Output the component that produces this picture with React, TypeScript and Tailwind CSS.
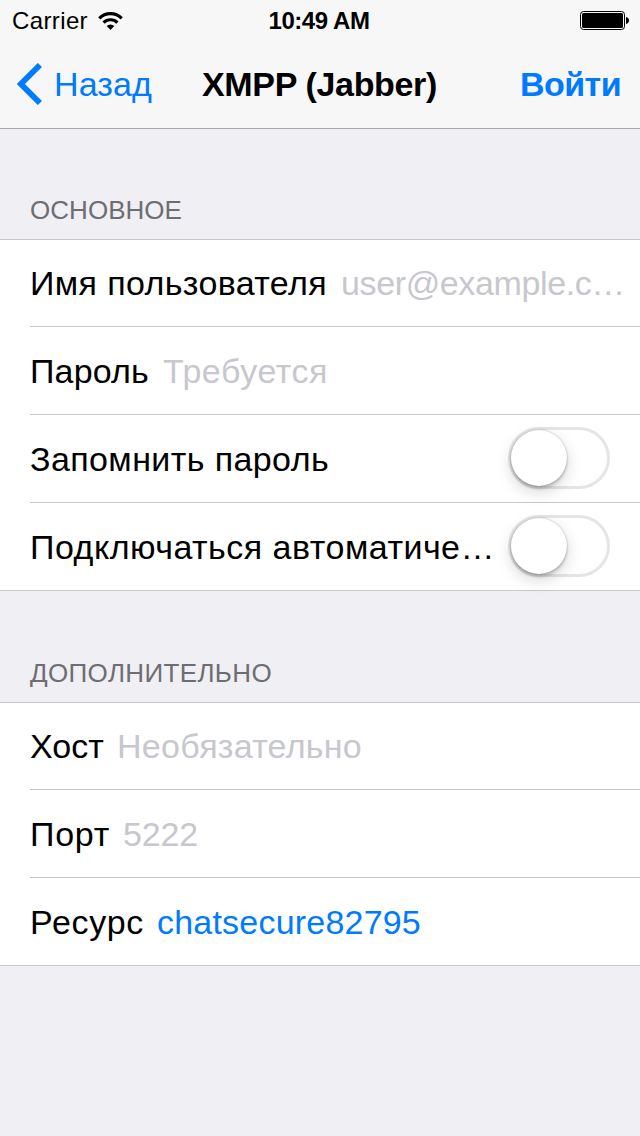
import React, { useLayoutEffect, useRef } from "react";

const font = "font-['Liberation_Sans',Arial,sans-serif]";

function T({ children, w, className = "" }: { children: string; w: number; className?: string }) {
  const ref = useRef<HTMLSpanElement>(null);
  useLayoutEffect(() => {
    const el = ref.current!;
    el.style.letterSpacing = "0px";
    const natural = el.getBoundingClientRect().width;
    el.style.letterSpacing = `${(w - natural) / children.length}px`;
  }, [children, w]);
  return (
    <span ref={ref} className={`inline-block whitespace-nowrap ${className}`}>
      {children}
    </span>
  );
}

function Toggle() {
  return (
    <div className="mt-3 mr-[30px] ml-auto flex h-[62px] w-[102px] rounded-full border-[3px] border-[#e5e5e5] bg-white">
      <div className="h-[56px] w-[56px] shrink-0 rounded-full bg-white shadow-[0_6px_16px_rgba(0,0,0,0.16),0_3px_3px_rgba(0,0,0,0.16),0_0_2px_rgba(0,0,0,0.3)]" />
    </div>
  );
}

type RowProps = { first?: boolean; last?: boolean; label: React.ReactNode; children?: React.ReactNode };

function Row({ first = false, last = false, label, children }: RowProps) {
  return (
    <div className="bg-white pl-[30px]">
      <div
        className={`flex items-start ${first || last ? "h-[87px]" : "h-[88px]"} ${last ? "" : "border-b border-[#c8c7cc]"}`}
      >
        <div className={`flex gap-[14px] ${first ? "pt-[23px]" : "pt-6"}`}>{label}</div>
        {children}
      </div>
    </div>
  );
}

export default function App() {
  return (
    <div className={`flex h-[1136px] w-[640px] flex-col bg-[#efeff4] text-[34px] leading-[40px] text-black ${font}`}>
      <header className="h-[129px] border-b border-[#a7a7aa] bg-[#f7f7f7]">
        <div className="grid h-10 grid-cols-3 items-center pt-0.5 text-[24px] leading-[28px]">
          <div className="flex items-center gap-[10px] pl-3">
            <T w={76}>Carrier</T>
            <svg width="25" height="18" viewBox="0 0 25 18" fill="none" stroke="#000" strokeWidth="3.2">
              <path d="M1.300 6.300a15.800 15.800 0 0 1 22.400 0M5.600 10.600a9.800 9.800 0 0 1 13.800 0" />
              <path d="M12.500 18l-3.800-4a5.400 5.400 0 0 1 7.600 0z" fill="#000" stroke="none" />
            </svg>
          </div>
          <div className="pr-[2px] text-center font-bold">
            <T w={101}>10:49 AM</T>
          </div>
          <div className="flex justify-end pr-[11px]">
            <svg width="49" height="20" viewBox="0 0 49 20">
              <rect x="0.5" y="0.5" width="44" height="18" rx="3" fill="none" stroke="#000" />
              <rect x="2" y="2" width="41" height="15" rx="1.5" />
              <path d="M46 6c4 .5 4 6.500 0 7z" />
            </svg>
          </div>
        </div>
        <div className="flex h-[88px] items-center text-[#007aff]">
          <svg className="ml-[17px]" width="26" height="42" viewBox="0 0 26 42" fill="none" stroke="#007aff" strokeWidth="5.8">
            <path d="M22.900 2L3.900 21l19 19" />
          </svg>
          <T w={98} className="ml-[11px]">Назад</T>
          <T w={235} className="ml-[50px] font-bold text-black">XMPP (Jabber)</T>
          <T w={101} className="mr-[19px] ml-auto font-bold">Войти</T>
        </div>
      </header>
      <h2 className="flex h-[110px] items-end pb-[14px] pl-[30px] text-[26px] leading-[30px] text-[#6d6d72]">
        <T w={152}>ОСНОВНОЕ</T>
      </h2>
      <section className="border-y border-[#c8c7cc]">
        <Row
          first
          label={<><T w={297}>Имя пользователя</T><T w={284} className="text-[#c7c7cd]">user@example.c…</T></>}
        />
        <Row label={<><T w={119}>Пароль</T><T w={165} className="text-[#c7c7cd]">Требуется</T></>} />
        <Row label={<T w={299}>Запомнить пароль</T>}><Toggle /></Row>
        <Row last label={<T w={465}>Подключаться автоматиче…</T>}><Toggle /></Row>
      </section>
      <h2 className="flex h-[111px] items-end pb-[14px] pl-[30px] text-[26px] leading-[30px] text-[#6d6d72]">
        <T w={242}>ДОПОЛНИТЕЛЬНО</T>
      </h2>
      <section className="border-y border-[#c8c7cc]">
        <Row first label={<><T w={74}>Хост</T><T w={245} className="-ml-px text-[#c7c7cd]">Необязательно</T></>} />
        <Row label={<><T w={80}>Порт</T><T w={75} className="-ml-px text-[#c7c7cd]">5222</T></>} />
        <Row last label={<><T w={114}>Ресурс</T><T w={264} className="-ml-px text-[#007aff]">chatsecure82795</T></>} />
      </section>
    </div>
  );
}
